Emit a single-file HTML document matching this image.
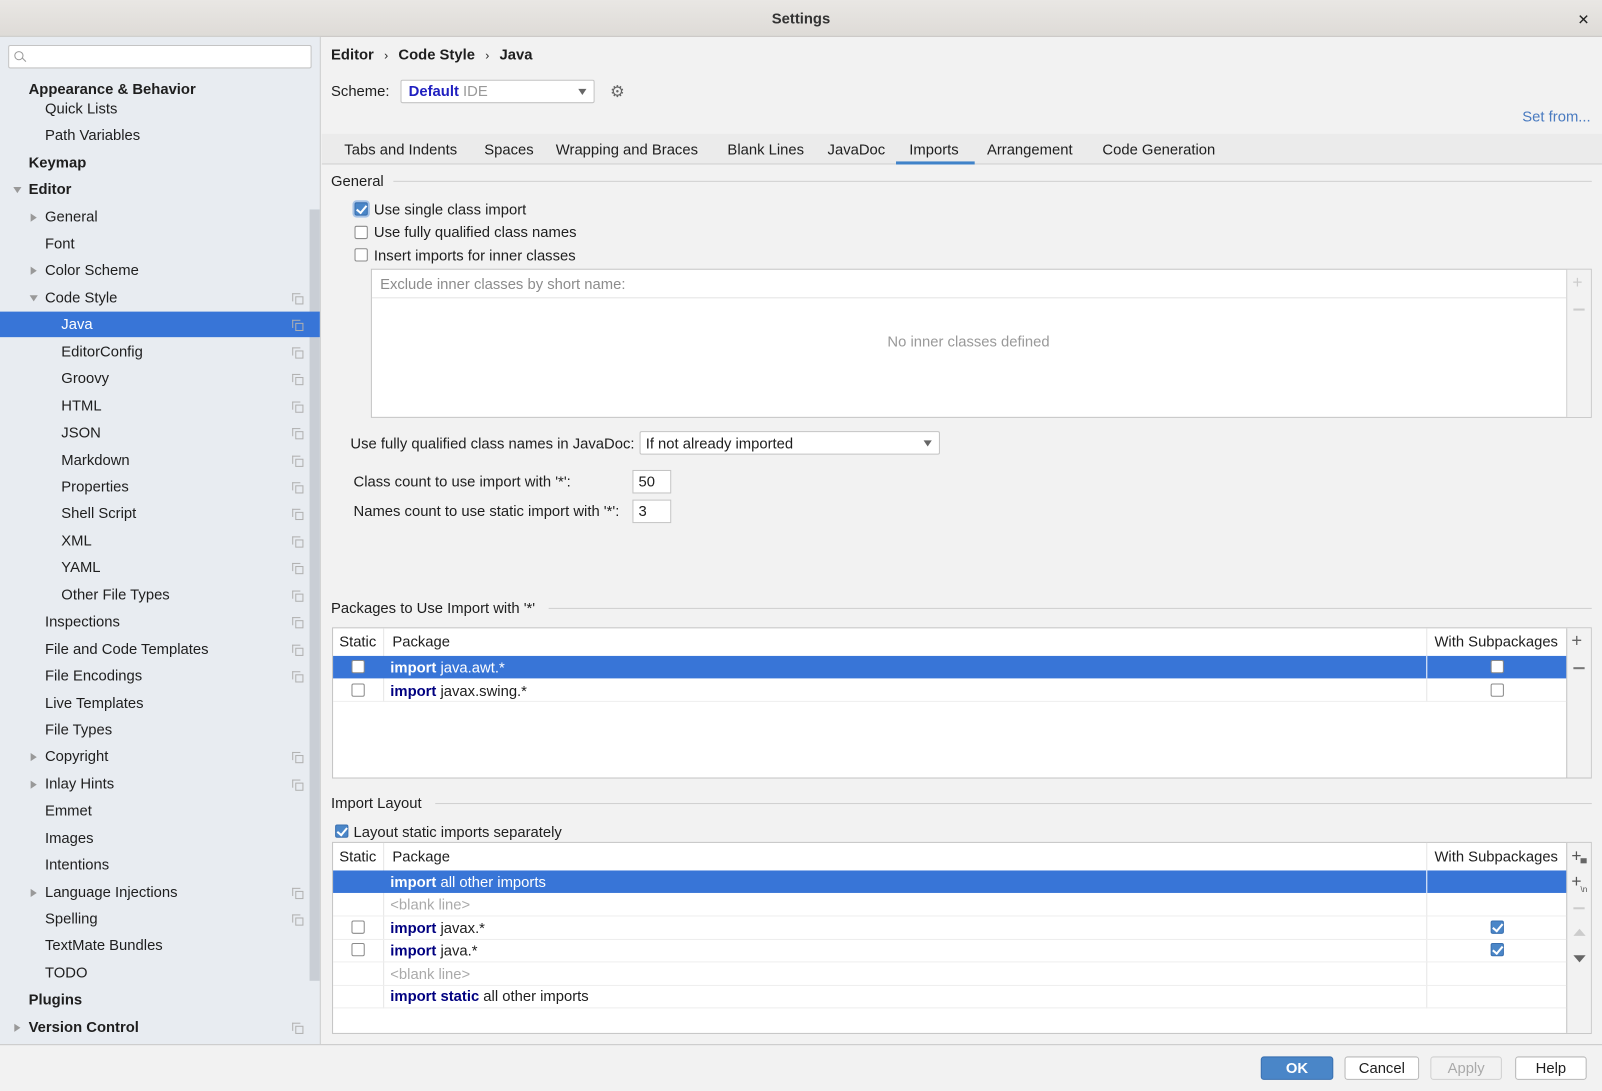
<!DOCTYPE html>
<html><head><meta charset="utf-8">
<style>
*{box-sizing:border-box;margin:0;padding:0}
html,body{width:1602px;height:1091px;overflow:hidden;background:#f2f2f2}
#w{position:absolute;left:0;top:0;width:1568px;height:1068px;transform:scale(1.02168);transform-origin:0 0;font-family:"Liberation Sans","DejaVu Sans",sans-serif;font-size:14.5px;color:#1e1e1e;background:#f2f2f2}
.a{position:absolute}
.t{position:absolute;line-height:18px;white-space:nowrap;margin-top:1px}
.b{font-weight:bold}
.cb{position:absolute;width:13px;height:13px;border:1px solid #8a8a8a;border-radius:2px;background:#fff}
.cb.on{background:#4a86c8;border-color:#3a70b0}
.cb.on:after{content:"";position:absolute;left:3px;top:0px;width:4px;height:8px;border:solid #fff;border-width:0 2px 2px 0;transform:rotate(40deg)}
.cp{position:absolute;left:289px;width:8px;height:8px;border:1px solid #b0b0b0;margin-top:1px}
.cp:before{content:"";position:absolute;left:-4px;top:-4px;width:7px;height:7px;border-left:1px solid #b0b0b0;border-top:1px solid #b0b0b0}
.arr{position:absolute;width:0;height:0;border-top:4px solid transparent;border-bottom:4px solid transparent;border-left:6px solid #999}
.arrd{position:absolute;width:0;height:0;border-left:4px solid transparent;border-right:4px solid transparent;border-top:6px solid #999}
.kw{color:#000080;font-weight:bold}
.sel .kw,.sel{color:#fff}
.hl{position:absolute;height:1px;background:#d0d0d0}
.btn{position:absolute;height:23px;border:1px solid #b8b8b8;border-radius:3px;background:#fff;text-align:center;line-height:22px}
</style></head><body><div id="w">
<div class="a" style="left:0;top:0;width:1568px;height:36px;background:linear-gradient(#e9e7e4,#dedbd7);border-bottom:1px solid #c3c0bc"></div>
<div class="t b" style="left:0;width:1568px;text-align:center;top:9px;color:#333">Settings</div>
<div class="t b" style="left:1544px;top:9px;font-size:14px;color:#222">✕</div>

<div class="a" style="left:0;top:36px;width:314px;height:986px;background:#e8ecf1;border-right:1px solid #cdcdcd"></div>
<div class="a" style="left:8px;top:44px;width:297px;height:23px;background:#fff;border:1px solid #c4c4c4;border-radius:2px"></div>
<div class="a" style="left:14px;top:50px;width:9px;height:9px;border:1.3px solid #999;border-radius:50%"></div>
<div class="a" style="left:21px;top:58px;width:5px;height:1.3px;background:#999;transform:rotate(45deg)"></div>
<div class="a" style="left:303px;top:205px;width:10px;height:755px;background:#c9ced5"></div>
<div class="a" style="left:0;top:305px;width:313px;height:25px;background:#3875d7"></div>

<div class="t b" style="left:28px;top:78px">Appearance &amp; Behavior</div>
<div class="t" style="left:44px;top:97px">Quick Lists</div>
<div class="t" style="left:44px;top:123px">Path Variables</div>
<div class="t b" style="left:28px;top:150px">Keymap</div>
<div class="arrd" style="left:13px;top:183px"></div>
<div class="t b" style="left:28px;top:176px">Editor</div>
<div class="arr" style="left:30px;top:209px"></div>
<div class="t" style="left:44px;top:203px">General</div>
<div class="t" style="left:44px;top:229px">Font</div>
<div class="arr" style="left:30px;top:261px"></div>
<div class="t" style="left:44px;top:255px">Color Scheme</div>
<div class="arrd" style="left:29px;top:289px"></div>
<div class="t" style="left:44px;top:282px">Code Style</div>
<div class="cp" style="top:289px"></div>
<div class="t" style="left:60px;top:308px;color:#fff">Java</div>
<div class="cp" style="top:315px"></div>
<div class="t" style="left:60px;top:335px">EditorConfig</div><div class="cp" style="top:342px"></div>
<div class="t" style="left:60px;top:361px">Groovy</div><div class="cp" style="top:368px"></div>
<div class="t" style="left:60px;top:388px">HTML</div><div class="cp" style="top:395px"></div>
<div class="t" style="left:60px;top:414px">JSON</div><div class="cp" style="top:421px"></div>
<div class="t" style="left:60px;top:441px">Markdown</div><div class="cp" style="top:448px"></div>
<div class="t" style="left:60px;top:467px">Properties</div><div class="cp" style="top:474px"></div>
<div class="t" style="left:60px;top:493px">Shell Script</div><div class="cp" style="top:500px"></div>
<div class="t" style="left:60px;top:520px">XML</div><div class="cp" style="top:527px"></div>
<div class="t" style="left:60px;top:546px">YAML</div><div class="cp" style="top:553px"></div>
<div class="t" style="left:60px;top:573px">Other File Types</div><div class="cp" style="top:580px"></div>
<div class="t" style="left:44px;top:599px">Inspections</div><div class="cp" style="top:606px"></div>
<div class="t" style="left:44px;top:626px">File and Code Templates</div><div class="cp" style="top:633px"></div>
<div class="t" style="left:44px;top:652px">File Encodings</div><div class="cp" style="top:659px"></div>
<div class="t" style="left:44px;top:679px">Live Templates</div>
<div class="t" style="left:44px;top:705px">File Types</div>
<div class="arr" style="left:30px;top:737px"></div>
<div class="t" style="left:44px;top:731px">Copyright</div><div class="cp" style="top:738px"></div>
<div class="arr" style="left:30px;top:764px"></div>
<div class="t" style="left:44px;top:758px">Inlay Hints</div><div class="cp" style="top:765px"></div>
<div class="t" style="left:44px;top:784px">Emmet</div>
<div class="t" style="left:44px;top:811px">Images</div>
<div class="t" style="left:44px;top:837px">Intentions</div>
<div class="arr" style="left:30px;top:870px"></div>
<div class="t" style="left:44px;top:864px">Language Injections</div><div class="cp" style="top:871px"></div>
<div class="t" style="left:44px;top:890px">Spelling</div><div class="cp" style="top:897px"></div>
<div class="t" style="left:44px;top:916px">TextMate Bundles</div>
<div class="t" style="left:44px;top:943px">TODO</div>
<div class="t b" style="left:28px;top:969px">Plugins</div>
<div class="arr" style="left:14px;top:1002px"></div>
<div class="t b" style="left:28px;top:996px">Version Control</div><div class="cp" style="top:1003px"></div>

<div class="t b" style="left:324px;top:44px">Editor <span style="font-weight:normal;font-size:12px;padding:0 6px">›</span> Code Style <span style="font-weight:normal;font-size:12px;padding:0 6px">›</span> Java</div>
<div class="t" style="left:324px;top:80px">Scheme:</div>
<div class="a" style="left:392px;top:78px;width:190px;height:23px;background:#fff;border:1px solid #c4c4c4;border-radius:2px"></div>
<div class="t" style="left:400px;top:80px"><span class="b" style="color:#2020c0">Default</span> <span style="color:#999">IDE</span></div>
<div class="arrd" style="left:566px;top:87px;border-top-color:#666"></div>
<div class="t" style="left:597px;top:81px;color:#666;font-size:16px">⚙</div>
<div class="t" style="left:1490px;top:105px;color:#4a7bc0">Set from...</div>

<div class="a" style="left:315px;top:131px;width:1253px;height:30px;background:#ebebeb;border-bottom:1px solid #d0d0d0"></div>
<div class="t" style="left:337px;top:137px">Tabs and Indents</div>
<div class="t" style="left:474px;top:137px">Spaces</div>
<div class="t" style="left:544px;top:137px">Wrapping and Braces</div>
<div class="t" style="left:712px;top:137px">Blank Lines</div>
<div class="t" style="left:810px;top:137px">JavaDoc</div>
<div class="t" style="left:890px;top:137px">Imports</div>
<div class="a" style="left:877px;top:158px;width:77px;height:3px;background:#4083c9"></div>
<div class="t" style="left:966px;top:137px">Arrangement</div>
<div class="t" style="left:1079px;top:137px">Code Generation</div>

<div class="t" style="left:324px;top:168px">General</div>
<div class="hl" style="left:385px;top:177px;width:1173px"></div>
<div class="cb on" style="left:347px;top:198px;box-shadow:0 0 0 2px #a7c3e6"></div>
<div class="t" style="left:366px;top:196px">Use single class import</div>
<div class="cb" style="left:347px;top:221px"></div>
<div class="t" style="left:366px;top:218px">Use fully qualified class names</div>
<div class="cb" style="left:347px;top:243px"></div>
<div class="t" style="left:366px;top:241px">Insert imports for inner classes</div>
<div class="a" style="left:363px;top:263px;width:1195px;height:146px;background:#fff;border:1px solid #c4c4c4"></div>
<div class="a" style="left:1533px;top:264px;width:24px;height:144px;background:#f2f2f2;border-left:1px solid #d0d0d0"></div>
<div class="hl" style="left:364px;top:291px;width:1169px;background:#e4e4e4"></div>
<div class="t" style="left:372px;top:269px;color:#8c8c8c">Exclude inner classes by short name:</div>
<div class="t" style="left:363px;width:1170px;text-align:center;top:325px;color:#999">No inner classes defined</div>
<div class="t" style="left:1539px;top:267px;color:#ccc;font-size:17px">+</div>
<div class="a" style="left:1540px;top:302px;width:11px;height:1.5px;background:#ccc"></div>

<div class="t" style="left:343px;top:425px">Use fully qualified class names in JavaDoc:</div>
<div class="a" style="left:626px;top:422px;width:294px;height:23px;background:#fff;border:1px solid #c4c4c4;border-radius:2px"></div>
<div class="t" style="left:632px;top:425px">If not already imported</div>
<div class="arrd" style="left:904px;top:431px;border-top-color:#666"></div>
<div class="t" style="left:346px;top:462px">Class count to use import with '*':</div>
<div class="a" style="left:619px;top:460px;width:38px;height:23px;background:#fff;border:1px solid #c4c4c4"></div>
<div class="t" style="left:625px;top:462px">50</div>
<div class="t" style="left:346px;top:491px">Names count to use static import with '*':</div>
<div class="a" style="left:619px;top:489px;width:38px;height:23px;background:#fff;border:1px solid #c4c4c4"></div>
<div class="t" style="left:625px;top:491px">3</div>

<div class="t" style="left:324px;top:586px">Packages to Use Import with '*'</div>
<div class="hl" style="left:537px;top:595px;width:1021px"></div>
<div class="a" style="left:325px;top:614px;width:1233px;height:148px;background:#fff;border:1px solid #c4c4c4"></div>
<div class="a" style="left:1533px;top:615px;width:24px;height:146px;background:#f2f2f2;border-left:1px solid #c4c4c4"></div>
<div class="a" style="left:375px;top:615px;width:1px;height:72px;background:#e6e6e6"></div>
<div class="a" style="left:1396px;top:615px;width:1px;height:72px;background:#e6e6e6"></div>
<div class="t" style="left:332px;top:619px">Static</div>
<div class="t" style="left:384px;top:619px">Package</div>
<div class="t" style="left:1404px;top:619px">With Subpackages</div>
<div class="a sel" style="left:326px;top:642px;width:1207px;height:22px;background:#3875d7"></div>
<div class="a" style="left:1396px;top:642px;width:1px;height:22px;background:#fff"></div>
<div class="cb" style="left:344px;top:646px"></div>
<div class="t sel" style="left:382px;top:644px"><span class="kw">import</span> java.awt.*</div>
<div class="cb" style="left:1459px;top:646px"></div>
<div class="hl" style="left:326px;top:686px;width:1207px;background:#eee"></div>
<div class="cb" style="left:344px;top:669px"></div>
<div class="t" style="left:382px;top:667px"><span class="kw">import</span> javax.swing.*</div>
<div class="cb" style="left:1459px;top:669px"></div>
<div class="t" style="left:1538px;top:617px;color:#666;font-size:18px">+</div>
<div class="a" style="left:1540px;top:653px;width:11px;height:2px;background:#777"></div>

<div class="t" style="left:324px;top:777px">Import Layout</div>
<div class="hl" style="left:426px;top:786px;width:1132px"></div>
<div class="cb on" style="left:328px;top:807px"></div>
<div class="t" style="left:346px;top:805px">Layout static imports separately</div>
<div class="a" style="left:325px;top:824px;width:1233px;height:188px;background:#fff;border:1px solid #c4c4c4"></div>
<div class="a" style="left:1533px;top:825px;width:24px;height:186px;background:#f2f2f2;border-left:1px solid #c4c4c4"></div>
<div class="a" style="left:375px;top:825px;width:1px;height:162px;background:#e6e6e6"></div>
<div class="a" style="left:1396px;top:825px;width:1px;height:162px;background:#e6e6e6"></div>
<div class="t" style="left:332px;top:829px">Static</div>
<div class="t" style="left:384px;top:829px">Package</div>
<div class="t" style="left:1404px;top:829px">With Subpackages</div>
<div class="a" style="left:326px;top:852px;width:1207px;height:22px;background:#3875d7"></div>
<div class="a" style="left:1396px;top:852px;width:1px;height:22px;background:#fff"></div>
<div class="t sel" style="left:382px;top:854px"><span class="kw">import</span> all other imports</div>
<div class="hl" style="left:326px;top:896px;width:1207px;background:#eee"></div>
<div class="t" style="left:382px;top:876px;color:#aaa">&lt;blank line&gt;</div>
<div class="cb" style="left:344px;top:901px"></div>
<div class="t" style="left:382px;top:899px"><span class="kw">import</span> javax.*</div>
<div class="cb on" style="left:1459px;top:901px"></div>
<div class="hl" style="left:326px;top:919px;width:1207px;background:#eee"></div>
<div class="cb" style="left:344px;top:923px"></div>
<div class="t" style="left:382px;top:921px"><span class="kw">import</span> java.*</div>
<div class="cb on" style="left:1459px;top:923px"></div>
<div class="hl" style="left:326px;top:941px;width:1207px;background:#eee"></div>
<div class="t" style="left:382px;top:944px;color:#aaa">&lt;blank line&gt;</div>
<div class="hl" style="left:326px;top:964px;width:1207px;background:#eee"></div>
<div class="t" style="left:382px;top:966px"><span class="kw">import static</span> all other imports</div>
<div class="hl" style="left:326px;top:986px;width:1207px;background:#eee"></div>
<div class="t" style="left:1538px;top:828px;color:#555;font-size:17px">+</div>
<div class="a" style="left:1547px;top:840px;width:6px;height:5px;background:#666"></div>
<div class="t" style="left:1538px;top:853px;color:#555;font-size:17px">+</div>
<div class="t" style="left:1547px;top:861px;color:#555;font-size:8px">\n</div>
<div class="a" style="left:1540px;top:888px;width:11px;height:1.5px;background:#ccc"></div>
<div class="a" style="left:1540px;top:909px;border-left:6px solid transparent;border-right:6px solid transparent;border-bottom:7px solid #ccc"></div>
<div class="a" style="left:1540px;top:935px;border-left:6px solid transparent;border-right:6px solid transparent;border-top:7px solid #666"></div>

<div class="a" style="left:0;top:1022px;width:1568px;height:1px;background:#c8c8c8"></div>
<div class="btn" style="left:1234px;top:1034px;width:71px;background:#4a86c8;border-color:#3a70b0;color:#fff;font-weight:bold">OK</div>
<div class="btn" style="left:1316px;top:1034px;width:73px">Cancel</div>
<div class="btn" style="left:1400px;top:1034px;width:70px;background:#f2f2f2;border-color:#d0d0d0;color:#aaa">Apply</div>
<div class="btn" style="left:1483px;top:1034px;width:70px">Help</div>
</div></body></html>
